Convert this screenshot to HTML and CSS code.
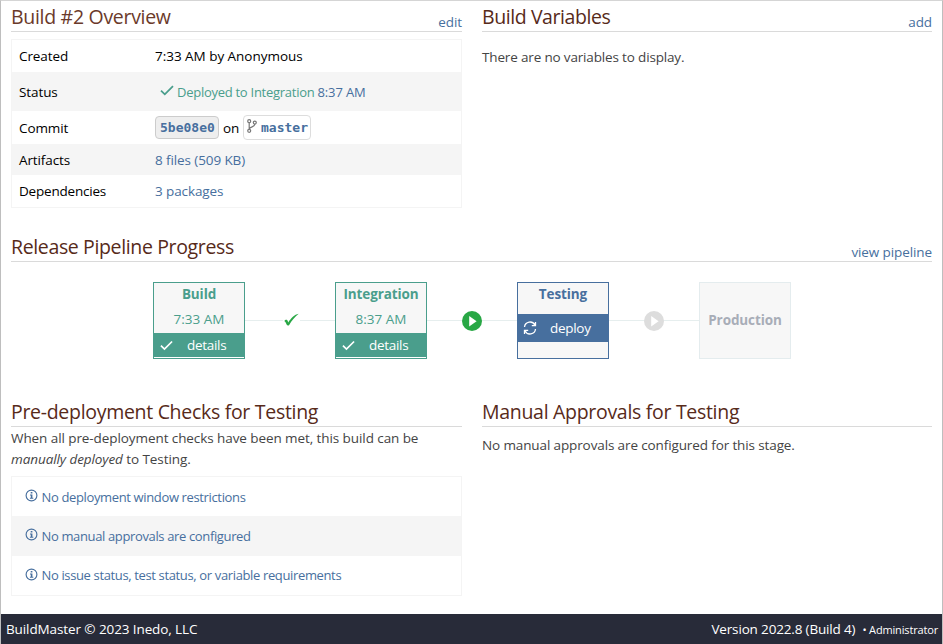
FILE: index.html
```html
<!DOCTYPE html>
<html lang="en">
<head>
<meta charset="utf-8">
<title>BuildMaster</title>
<link rel="stylesheet" href="styles.css">
</head>
<body>
<svg class="defs" width="0" height="0">
  <symbol id="check" viewBox="0 0 14 11"><path d="M1 5.6 4.8 9.3 13 1.2" fill="none" stroke="currentColor" stroke-width="1.8"/></symbol>
  <symbol id="info" viewBox="0 0 13 13"><circle cx="6.5" cy="6.5" r="5.4" fill="none" stroke="currentColor" stroke-width="1.15"/><path d="M5.7 3h1.7v1.5H5.7zM5 5.5h2.4v3.3H8.3v.9H4.9v-.9h.9V6.4H5z" fill="currentColor"/></symbol>
  <symbol id="play" viewBox="0 0 20 20"><circle cx="10" cy="10" r="10" fill="currentColor"/><path d="M7.2 5v10.6l7.4-5.3z" fill="#fff"/></symbol>
</svg>
<div class="page">
  <main class="content">
    <div class="columns overview">
      <section>
        <header class="head"><h2 class="h-overview">Build #2 Overview</h2><a>edit</a></header>
        <dl class="info-table">
          <div class="row created"><dt>Created</dt><dd>7:33 AM by Anonymous</dd></div>
          <div class="row status"><dt>Status</dt><dd><svg class="status-icon"><use href="#check"/></svg><span class="green">Deployed to Integration</span> <a>8:37 AM</a></dd></div>
          <div class="row commit"><dt>Commit</dt><dd><a class="chip hash">5be08e0</a><span class="on">on</span><a class="chip branch"><svg class="branch-icon" viewBox="0 0 10 14"><g fill="none" stroke="#777" stroke-width="1.2"><circle cx="2.2" cy="2.2" r="1.5"/><circle cx="2.2" cy="11.8" r="1.5"/><circle cx="7.8" cy="3.6" r="1.5"/><path d="M2.2 3.7v6.6M7.8 5.1c0 3.2-4.6 2.2-5.4 4.8"/></g></svg>master</a></dd></div>
          <div class="row artifacts"><dt>Artifacts</dt><dd><a>8 files (509 KB)</a></dd></div>
          <div class="row deps"><dt>Dependencies</dt><dd><a>3 packages</a></dd></div>
        </dl>
      </section>
      <section>
        <header class="head"><h2 class="h-vars">Build Variables</h2><a>add</a></header>
        <p class="no-vars">There are no variables to display.</p>
      </section>
    </div>

    <section class="progress">
      <header class="head"><h2 class="h-progress">Release Pipeline Progress</h2><a class="view">view pipeline</a></header>
      <div class="pipeline">
        <div class="stage done"><b>Build</b><span class="time">7:33 AM</span><a class="action"><svg><use href="#check"/></svg><span>details</span></a></div>
        <div class="link"><svg class="tick" viewBox="0 0 15 13"><path d="M.3 8.1C1 6.9 2.3 6.5 3.1 7c.6.4.8 1.5 1.1 2.4C7 5.300 10.400 1.600 14.700.8 10.700 4 7.700 7.600 5.200 11.900c-.5.700-1.900.700-2.300.1C2.300 10.800 1.500 8.800.3 8.100z" fill="#28a745"/></svg></div>
        <div class="stage done"><b>Integration</b><span class="time">8:37 AM</span><a class="action"><svg><use href="#check"/></svg><span>details</span></a></div>
        <div class="link"><svg class="play ready"><use href="#play"/></svg></div>
        <div class="stage current"><b>Testing</b><a class="action"><svg viewBox="0 0 14 14"><g fill="none" stroke="currentColor" stroke-width="1.3"><path d="M1.500 6A5.500 5.500 0 0 1 12 4.300M12.500 1v3.700H8.800M12.500 8A5.500 5.500 0 0 1 2 9.700M1.500 13V9.300h3.700"/></g></svg><span>deploy</span></a></div>
        <div class="link"><svg class="play waiting"><use href="#play"/></svg></div>
        <div class="stage future"><b>Production</b></div>
      </div>
    </section>

    <div class="columns">
      <section>
        <header class="head"><h2 class="h-checks">Pre-deployment Checks for Testing</h2></header>
        <p class="intro">When all pre-deployment checks have been met, this build can be<br><em>manually deployed</em> to Testing.</p>
        <ul class="checks">
          <li><svg><use href="#info"/></svg><a>No deployment window restrictions</a></li>
          <li><svg><use href="#info"/></svg><a>No manual approvals are configured</a></li>
          <li><svg><use href="#info"/></svg><a>No issue status, test status, or variable requirements</a></li>
        </ul>
      </section>
      <section>
        <header class="head"><h2 class="h-manual">Manual Approvals for Testing</h2></header>
        <p class="no-approvals">No manual approvals are configured for this stage.</p>
      </section>
    </div>
  </main>
  <footer class="footer"><span class="copy">BuildMaster © 2023 Inedo, LLC</span><span class="right"><span class="version">Version 2022.8 (Build 4)</span><small>• Administrator</small></span></footer>
</div>
</body>
</html>
```
FILE: styles.css
```css
* { box-sizing: border-box; }
body {
  margin: 0;
  background: #fff;
  color: #444;
  font-family: "Open Sans", "Noto Sans", sans-serif;
  font-size: 13.5px;
  letter-spacing: -0.1px;
  line-height: 20px;
}
h2, p, dl, dd, ul { margin: 0; padding: 0; font-weight: 400; }
a { color: #476f9e; }
.defs { position: absolute; }
.page {
  display: flex;
  flex-direction: column;
  height: 644px;
  border: 1px solid #bebebe;
  border-top-color: #d5d5d5;
  border-bottom: 0;
  overflow: hidden;
}
.content { flex: 1; padding: 0 10px; }
.columns { display: grid; grid-template-columns: 451px 450px; column-gap: 20px; }
.overview { height: 230px; }

.head {
  display: flex;
  justify-content: space-between;
  height: 31px;
  border-bottom: 1px solid #dadada;
  white-space: nowrap;
}
h2 { font-size: 19.5px; line-height: 32px; letter-spacing: -0.3px; color: #572a1a; }
.h-overview { color: #6b3a2a; }
.h-vars { letter-spacing: -0.42px; }
.h-progress { letter-spacing: -0.36px; }
.head a { padding-top: 11px; }

.info-table { margin-top: 7px; border: 1px solid #f4f4f4; color: #000; }
.row { display: grid; grid-template-columns: 136px 1fr; align-items: center; padding-left: 7px; white-space: nowrap; }
.row:nth-child(even), .checks li:nth-child(even) { background: #f5f5f5; }
.row dd { display: flex; align-items: center; }
.created { height: 32px; }
.created dd { letter-spacing: -0.03px; }
.status { height: 39px; }
.status dd { font-size: 13px; }
.commit { height: 33px; }
.artifacts { height: 31px; }
.deps { height: 32px; }
.deps dt { letter-spacing: -0.2px; }
.status-icon { width: 14px; height: 11px; margin: 0 3px 3px 5px; color: #4a9e8c; }
.green { margin-right: 3px; letter-spacing: -0.27px; color: #4a9e8c; }
.chip {
  display: flex;
  align-items: center;
  border: 1px solid #ddd;
  border-radius: 4px;
  font: bold 13px "DejaVu Sans Mono", monospace;
  letter-spacing: 0;
}
.hash { width: 64px; height: 23px; padding-left: 4px; border-color: #ccc; background: #eee; }
.on { width: 24px; padding-left: 4px; }
.branch { width: 68px; height: 25px; padding-left: 3px; }
.branch-icon { width: 10px; height: 14px; margin: 0 4px 3px 0; }
.no-vars { padding-top: 15px; letter-spacing: -0.16px; }

.progress { height: 165px; }
.pipeline { display: flex; align-items: center; padding: 20px 0 0 142px; }
.stage {
  display: flex;
  flex-direction: column;
  width: 92px;
  height: 77px;
  border: 1px solid currentColor;
  background: #f7f7f7;
  text-align: center;
}
.stage b { height: 24px; line-height: 22px; }
.time { height: 26px; line-height: 25px; letter-spacing: 0; }
.done { color: #4a9e8c; }
.current { color: #476f9e; }
.future { justify-content: center; border-color: #e4ecee; color: #a8adb7; }
.action { display: flex; align-items: center; height: 24px; padding-left: 6px; background: #4a9e8c; color: #fff; letter-spacing: -0.3px; }
.done .action { box-shadow: 0 1px #fff; }
.current .action { height: 28px; margin-top: 7px; padding-left: 5px; background: #476f9e; }
.action svg { width: 13px; height: 11px; }
.current .action svg { width: 14px; height: 14px; }
.action span { margin-left: 14px; }
.current .action span { margin-left: 13px; }
.link {
  display: flex;
  align-items: center;
  justify-content: center;
  width: 90px;
  height: 20px;
  background: linear-gradient(#e6eeee, #e6eeee) 0 9px / 100% 1px no-repeat;
}
.tick { width: 17px; height: 13px; margin: 0 0 2px 2px; padding: 0 1px; background: #fff; }
.play { width: 20px; height: 20px; }
.ready { color: #28a745; }
.waiting { color: #ddd; }

.intro { padding-top: 1px; line-height: 21px; letter-spacing: -0.08px; white-space: nowrap; }
.checks { margin-top: 6px; border: 1px solid #f4f4f4; list-style: none; font-size: 13px; letter-spacing: -0.36px; }
.checks li { display: flex; align-items: center; height: 39.33px; padding-left: 12.5px; }
.checks svg { width: 13px; height: 13px; margin: 0 4px 2px 0; color: #476f9e; }
.no-approvals { padding-top: 8px; letter-spacing: -0.12px; }

.footer {
  display: flex;
  justify-content: space-between;
  height: 30px;
  padding: 0 4px 0 5px;
  background: #282b39;
  color: #fff;
  line-height: 30px;
}
.version { letter-spacing: -0.16px; }
small { margin-left: 7px; font-size: 11px; letter-spacing: -0.16px; }
```
